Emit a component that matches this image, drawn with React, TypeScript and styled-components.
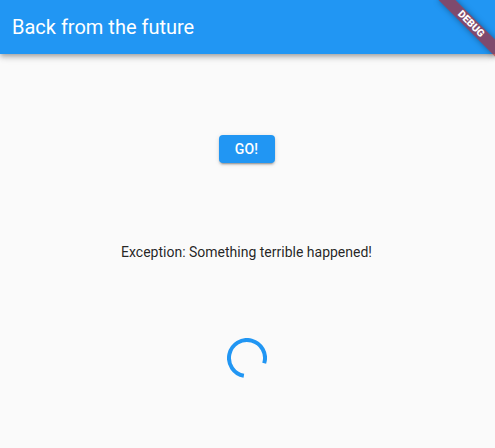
import React from "react";
import styled, { createGlobalStyle } from "styled-components";

const Global = createGlobalStyle`
  html, body { margin: 0; padding: 0; }
  body {
    background: #fafafa;
    font-family: Roboto, "Noto Sans", sans-serif;
    overflow: hidden;
  }
`;

const Page = styled.div`
  position: relative;
  width: 495px;
  height: 448px;
  background: #fafafa;
  overflow: hidden;
  display: flex;
  flex-direction: column;
`;

const AppBar = styled.header`
  height: 54px;
  flex: none;
  background: #2196f3;
  display: flex;
  align-items: center;
  padding: 0 12px;
  box-shadow: 0 2px 4px -1px rgba(0, 0, 0, 0.2), 0 4px 5px 0 rgba(0, 0, 0, 0.14),
    0 1px 10px 0 rgba(0, 0, 0, 0.12);
  position: relative;
  z-index: 1;
`;

const Title = styled.h1`
  margin: 0;
  font-family: Roboto, sans-serif;
  font-weight: 400;
  font-size: 20px;
  color: #ffffff;
  line-height: 24px;
`;

const Body = styled.main`
  flex: 1;
  display: flex;
  flex-direction: column;
  align-items: center;
  padding: 81px 2px 0 0;
`;

const GoButton = styled.button`
  width: 56px;
  height: 28px;
  border: none;
  border-radius: 4px;
  background: #2196f3;
  color: #fff;
  font-family: Roboto, sans-serif;
  font-weight: 500;
  font-size: 14px;
  letter-spacing: 0.2px;
  padding: 0;
  margin-bottom: 81px;
  box-shadow: 0 3px 1px -2px rgba(0, 0, 0, 0.2), 0 2px 2px 0 rgba(0, 0, 0, 0.14),
    0 1px 5px 0 rgba(0, 0, 0, 0.12);
  cursor: pointer;
`;

const Message = styled.p`
  margin: 0 0 78px;
  font-family: Roboto, sans-serif;
  font-size: 14px;
  line-height: 16px;
  color: rgba(0, 0, 0, 0.87);
`;

const Spinner = styled.svg`
  width: 40px;
  height: 40px;
  display: block;
`;

const Banner = styled.div`
  position: absolute;
  top: 24px;
  right: 24px;
  width: 80px;
  height: 12px;
  margin: -6px -40px 0 0;
  transform: rotate(45deg);
  background: rgba(183, 28, 28, 0.627);
  box-shadow: 0 0 6px rgba(0, 0, 0, 0.35);
  color: #fff;
  font-family: Roboto, sans-serif;
  font-weight: 900;
  font-size: 10.2px;
  line-height: 12px;
  text-align: center;
  z-index: 2;
`;

function arcPath(cx: number, cy: number, r: number, a0: number, a1: number) {
  const rad = (d: number) => (d * Math.PI) / 180;
  const x0 = cx + r * Math.cos(rad(a0));
  const y0 = cy + r * Math.sin(rad(a0));
  const x1 = cx + r * Math.cos(rad(a1));
  const y1 = cy + r * Math.sin(rad(a1));
  const large = a1 - a0 > 180 ? 1 : 0;
  return `M ${x0} ${y0} A ${r} ${r} 0 ${large} 1 ${x1} ${y1}`;
}

export default function App() {
  return (
    <>
      <Global />
      <Page>
        <AppBar>
          <Title>Back from the future</Title>
        </AppBar>
        <Body>
          <GoButton>GO!</GoButton>
          <Message>Exception: Something terrible happened!</Message>
          <Spinner viewBox="0 0 40 40">
            <path
              d={arcPath(20, 20, 18, 100, 377)}
              fill="none"
              stroke="#2196f3"
              strokeWidth={4}
            />
          </Spinner>
        </Body>
        <Banner>DEBUG</Banner>
      </Page>
    </>
  );
}
